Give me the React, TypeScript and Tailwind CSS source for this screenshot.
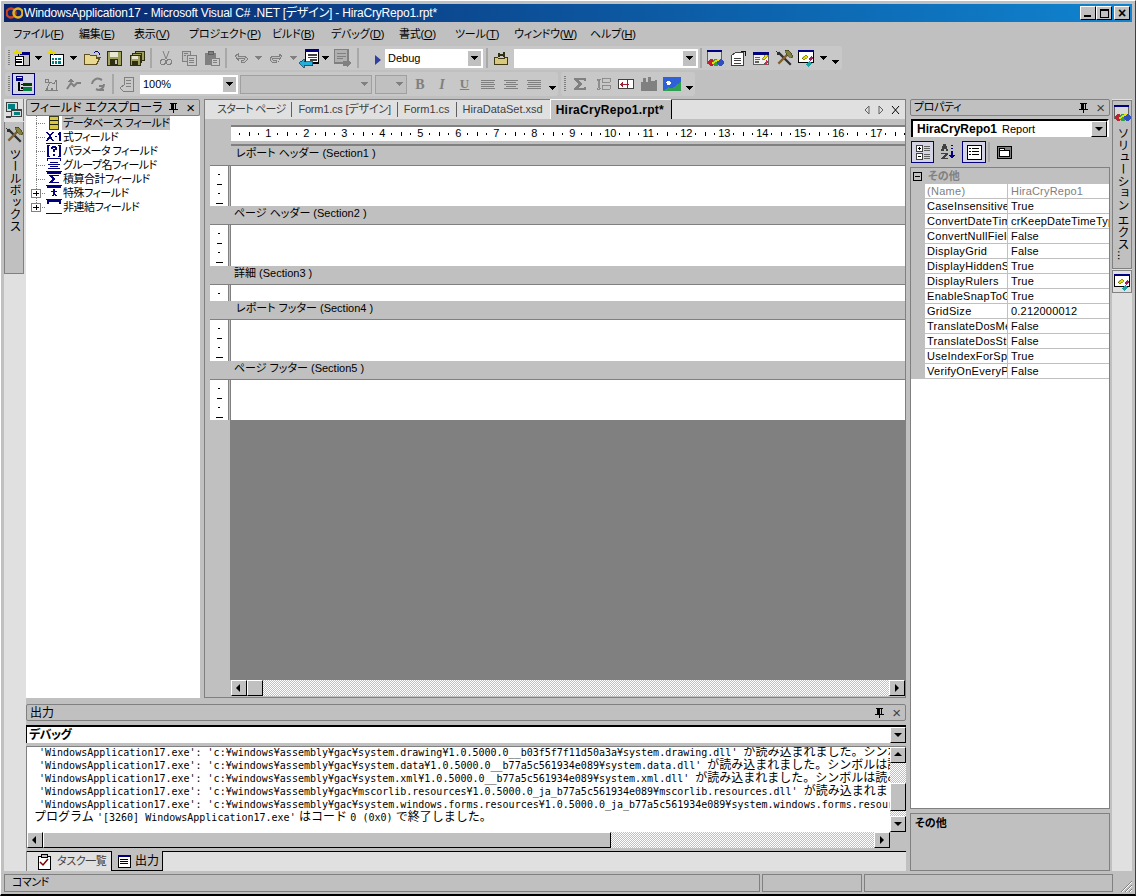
import React from 'react';

const bevel = 'border border-t-white border-l-white border-b-black border-r-black bg-[#c0c0c0]';
const dither = 'bg-[repeating-conic-gradient(#ffffff_0_25%,#c0c0c0_0_50%)] bg-[length:2px_2px]';

type IconProps = { children: React.ReactNode; size?: number };

const Ico = ({ children, size = 16 }: IconProps) => (
  <svg width={size} height={size} viewBox="0 0 16 16" shapeRendering="crispEdges" className="shrink-0">
    {children}
  </svg>
);

const DropArrow = ({ color = '#000' }: { color?: string }) => (
  <svg width="7" height="4" viewBox="0 0 7 4" shapeRendering="crispEdges">
    <path d="M0 0h7v1H6v1H5v1H4v1H3V3H2V2H1V1H0z" fill={color} />
  </svg>
);

const Chevron = () => (
  <div className="flex flex-col items-center mt-[14px]">
    <DropArrow />
  </div>
);

const Sparkle = () => (
  <path d="M3 0h1v2h1V0h1v3h2v1H6v2H5V4H3v2H2V4H0V3h2z" fill="#e8d800" />
);

const icons = {
  newProject: (
    <Ico size={18}>
      <rect x="5" y="3" width="10" height="12" fill="#c0c0c0" stroke="#000" />
      <rect x="5" y="3" width="10" height="2" fill="#000080" />
      <rect x="2" y="7" width="7" height="8" fill="#fff" stroke="#000" />
      <path d="M3 9h5v1H3zM3 11h5v1H3z" fill="#000" />
      <Sparkle />
    </Ico>
  ),
  addItem: (
    <Ico size={18}>
      <rect x="3" y="5" width="12" height="10" fill="#fff" stroke="#000" />
      <path d="M4 8h2v2H4zM7 8h2v2H7zM10 8h2v2h-2zM4 11h2v2H4zM7 11h2v2H7zM10 11h2v2h-2z" fill="#008080" />
      <Sparkle />
    </Ico>
  ),
  open: (
    <Ico size={18}>
      <path d="M1 5h5l1 1h5v2h3l-3 6H1z" fill="#e8d890" stroke="#605020" />
      <path d="M10 3l2-1 2 1 1 2" fill="none" stroke="#000080" />
    </Ico>
  ),
  save: (
    <Ico size={16}>
      <rect x="1" y="1" width="14" height="14" fill="#a0a060" stroke="#303010" />
      <rect x="4" y="2" width="8" height="5" fill="#e8e8d0" />
      <rect x="4" y="9" width="8" height="6" fill="#303010" />
      <rect x="9" y="10" width="2" height="4" fill="#c0c0c0" />
    </Ico>
  ),
  saveAll: (
    <Ico size={16}>
      <rect x="6" y="1" width="9" height="9" fill="#a0a060" stroke="#303010" />
      <rect x="3" y="3" width="9" height="9" fill="#a0a060" stroke="#303010" />
      <rect x="1" y="5" width="10" height="10" fill="#a0a060" stroke="#303010" />
      <rect x="3" y="6" width="6" height="3" fill="#e8e8d0" />
      <rect x="3" y="11" width="6" height="4" fill="#303010" />
    </Ico>
  ),
  cut: (
    <Ico>
      <path d="M5 1l3 8M11 1L8 9" stroke="#808080" fill="none" shapeRendering="auto" />
      <circle cx="5" cy="12" r="2.5" fill="none" stroke="#808080" />
      <circle cx="11" cy="12" r="2.5" fill="none" stroke="#808080" />
    </Ico>
  ),
  copy: (
    <Ico>
      <rect x="1" y="1" width="8" height="10" fill="#c0c0c0" stroke="#808080" />
      <rect x="6" y="5" width="9" height="10" fill="#c8c8c8" stroke="#808080" />
      <path d="M8 8h5v1H8zM8 10h5v1H8zM8 12h5v1H8zM3 3h4v1H3zM3 5h2v1H3z" fill="#808080" />
    </Ico>
  ),
  paste: (
    <Ico>
      <rect x="1" y="3" width="11" height="12" fill="#808080" />
      <rect x="4" y="1" width="5" height="3" fill="#808080" stroke="#606060" />
      <rect x="7" y="8" width="8" height="7" fill="#c8c8c8" stroke="#808080" />
      <path d="M9 10h4v1H9zM9 12h4v1H9z" fill="#808080" />
    </Ico>
  ),
  undo: (
    <Ico>
      <path d="M2 6l3-2v2h6l3 2v2l-2 2H8v-2h3l1-1-1-1H5v2z" fill="#c0c0c0" stroke="#808080" />
    </Ico>
  ),
  redo: (
    <Ico>
      <path d="M14 6l-3-2v2H5L2 8v2l2 2h4v-2H5L4 9l1-1h6v2z" fill="#c0c0c0" stroke="#808080" />
    </Ico>
  ),
  nav: (
    <Ico size={20}>
      <rect x="5" y="1" width="11" height="11" fill="#fff" stroke="#000" />
      <rect x="5" y="1" width="11" height="2" fill="#000080" />
      <path d="M7 5h7v1H7zM7 7h7v1H7zM9 9h5v1H9z" fill="#404040" />
      <path d="M0 12l4-3v2h7v3H4v2z" fill="#20b0d8" stroke="#004060" strokeWidth="0.6" />
    </Ico>
  ),
  find: (
    <Ico size={20}>
      <rect x="1" y="1" width="11" height="11" fill="#b0b0b0" stroke="#808080" />
      <path d="M3 4h7v1H3zM3 6h7v1H3zM3 8h5v1H3z" fill="#808080" />
      <path d="M8 10h3V8l4 4-4 4v-2H8z" fill="#808080" />
    </Ico>
  ),
  openFind: (
    <Ico size={17}>
      <path d="M1 7h3l1 1h6v-1h3v7H1z" fill="#d8c880" stroke="#403810" />
      <path d="M5 3h2v4H5zM9 2h2v5H9zM7 4h2v2H7z" fill="#303010" />
    </Ico>
  ),
  solution: (
    <Ico size={18}>
      <rect x="1" y="1" width="13" height="12" fill="#d8d8d8" stroke="#606060" />
      <rect x="1" y="1" width="13" height="2" fill="#000080" />
      <circle cx="5" cy="12" r="3" fill="#c02030" />
      <circle cx="9" cy="12" r="3" fill="#30a040" />
      <circle cx="13" cy="12" r="3" fill="#3050c0" />
      <path d="M5 13L12 9" stroke="#e8e000" strokeWidth="1.5" />
    </Ico>
  ),
  properties: (
    <Ico size={18}>
      <path d="M2 6l4-3h7v12H2z" fill="#fff" stroke="#404040" />
      <path d="M4 8h7v1H4zM4 10h7v1H4zM4 12h7v1H4z" fill="#404040" />
      <path d="M11 2h4v4h-1V3h-3z" fill="#000080" />
    </Ico>
  ),
  classView: (
    <Ico size={18}>
      <rect x="1" y="3" width="14" height="11" fill="#f0f0f0" stroke="#606060" />
      <rect x="1" y="3" width="14" height="2" fill="#000080" />
      <path d="M3 7h4v1H3zM3 9h4v1H3zM3 11h3v1H3z" fill="#606060" />
      <path d="M9 9l3-4 2 1-3 4z" fill="#e8e000" stroke="#505000" strokeWidth="0.5" />
      <path d="M11 13l2-3 2 1-2 3z" fill="#c03050" />
    </Ico>
  ),
  tools: (
    <Ico size={18}>
      <path d="M3 3l11 11" stroke="#303030" strokeWidth="2" shapeRendering="auto" />
      <path d="M13 3L3 13" stroke="#806030" strokeWidth="2" shapeRendering="auto" />
      <path d="M9 1h3l3 3 1 3-2 1-4-4z" fill="#808040" stroke="#303010" strokeWidth="0.5" />
      <path d="M1 2l3 1v2H2z" fill="#303030" />
    </Ico>
  ),
  toolbox: (
    <Ico size={18}>
      <rect x="1" y="1" width="14" height="11" fill="#fff" stroke="#000" />
      <rect x="1" y="1" width="14" height="2" fill="#000080" />
      <path d="M4 8l4-3 2 2-4 3z" fill="#e8e000" stroke="#505000" strokeWidth="0.5" />
      <path d="M10 9l3-3 2 2-3 3z" fill="#a02060" />
      <path d="M8 14l3-3 2 2-3 3z" fill="#20a0a0" />
    </Ico>
  ),
  fieldExplorer: (
    <Ico size={18}>
      <rect x="1" y="1" width="6" height="4" fill="#000080" />
      <rect x="2" y="2" width="4" height="1" fill="#e8e8e8" />
      <path d="M3 6h1v7h3v1H3zM5 8h2v1H5zM5 11h2v1H5z" fill="#000" />
      <rect x="7" y="7" width="8" height="3" fill="#004000" />
      <rect x="7" y="11" width="8" height="3" fill="#008040" />
    </Ico>
  ),
  gallery: (
    <Ico>
      <path d="M3 14l4-8 4 2 2-4 1 10z" fill="none" stroke="#808080" />
      <circle cx="4" cy="5" r="2" fill="none" stroke="#808080" />
      <circle cx="4" cy="13" r="1.5" fill="#808080" />
      <circle cx="9" cy="13" r="1.5" fill="#808080" />
    </Ico>
  ),
  trend: (
    <Ico>
      <path d="M1 13l4-6 3 3 3-3h4" fill="none" stroke="#808080" strokeWidth="2" shapeRendering="auto" />
      <path d="M5 2l3 4H2z" fill="#808080" />
    </Ico>
  ),
  refresh: (
    <Ico>
      <path d="M2 8a6 6 0 0 1 8-5l2 1M14 8a6 6 0 0 1-6 6l-2-1" fill="none" stroke="#808080" strokeWidth="2" shapeRendering="auto" />
      <path d="M9 9h5v1l-3 3h3v2H9v-1l3-3H9z" fill="#808080" />
    </Ico>
  ),
  browse: (
    <Ico>
      <path d="M5 1h9v14H4l-3-3 4-3z" fill="none" stroke="#808080" />
      <path d="M7 4h5v1H7zM7 7h5v1H7zM7 10h5v1H7z" fill="#808080" />
    </Ico>
  ),
  sum: (
    <Ico>
      <path d="M2 2h12v3h-2V4H6l4 4-4 4h6v-1h2v3H2v-2l4-4-4-4z" fill="#808080" />
    </Ico>
  ),
  tree: (
    <Ico>
      <path d="M2 3h3v1H4v8h1v1H2v-1h1V4H2zM7 2h8v4H7zM7 9h8v4H7z" fill="none" stroke="#808080" strokeWidth="0.8" />
    </Ico>
  ),
  link: (
    <Ico size={18}>
      <rect x="1" y="4" width="8" height="8" fill="#fff" stroke="#404040" />
      <rect x="9" y="4" width="6" height="8" fill="#fff" stroke="#404040" />
      <path d="M3 8h8v1H3zM3 8l2-2v5z" fill="#a02030" />
    </Ico>
  ),
  chart: (
    <Ico size={18}>
      <path d="M1 14V6h2V3h2v3h2V2h3v3h3V4h2v10z" fill="#808080" />
    </Ico>
  ),
  picture: (
    <Ico size={18}>
      <rect x="0" y="2" width="16" height="12" fill="#3060d8" />
      <path d="M0 14l5-3 3 1 8-6v8z" fill="#30a050" />
      <circle cx="5" cy="7" r="2" fill="#fff" />
    </Ico>
  ),
  computer: (
    <Ico size={18}>
      <rect x="1" y="1" width="10" height="8" fill="#d8d8d8" stroke="#404040" />
      <rect x="3" y="3" width="6" height="4" fill="#008080" />
      <rect x="6" y="8" width="9" height="6" fill="#d8d8d8" stroke="#404040" />
      <rect x="8" y="10" width="5" height="2" fill="#008080" />
      <path d="M1 13h4v2H1z" fill="#404040" />
    </Ico>
  ),
  database: (
    <Ico size={14}>
      <rect x="3" y="1" width="10" height="14" fill="#d8c840" stroke="#202000" />
      <path d="M3 5h10v1H3zM3 9h10v1H3z" fill="#202000" />
    </Ico>
  ),
  formula: (
    <svg width="16" height="13" viewBox="0 0 16 13" className="shrink-0" shapeRendering="crispEdges">
      <path d="M0 1h2l2 3 2-3h2L5 5l3 5H6L4 7l-2 3H0l3-5zM9 5h2v1H9zM13 1h2v9h-2V3l-1 1V2zM0 12h16v1H0z" fill="#000080" />
    </svg>
  ),
  param: (
    <svg width="16" height="14" viewBox="0 0 16 14" className="shrink-0" shapeRendering="crispEdges">
      <path d="M1 1h3v1H3v10h1v1H1zM12 1h3v12h-3v-1h1V2h-1zM6 2h4v1h1v3H9v2H7V5h2V4H7v1H5V3h1zM7 10h2v2H7z" fill="#000080" />
    </svg>
  ),
  group: (
    <svg width="16" height="14" viewBox="0 0 16 14" className="shrink-0" shapeRendering="crispEdges">
      <path d="M1 0h14v3h-1V1H2v2H1zM4 4h8v1H4zM2 6h12v1H2zM4 8h8v1H4zM2 10h12v1H2zM0 13h16v1H0z" fill="#000080" />
    </svg>
  ),
  sigma: (
    <svg width="16" height="14" viewBox="0 0 16 14" className="shrink-0" shapeRendering="crispEdges">
      <path d="M1 0h14v2H1zM3 3h10v1h-7l3 3-3 3h7v1H3v-1l3-3-3-3zM0 13h16v1H0z" fill="#000080" />
    </svg>
  ),
  special: (
    <svg width="16" height="14" viewBox="0 0 16 14" className="shrink-0" shapeRendering="crispEdges">
      <path d="M1 0h14v2H1zM7 3h2v2h2v1H9v2l2 2H9l-1-1-1 1H5l2-2V6H5V5h2zM0 13h16v1H0z" fill="#000080" />
    </svg>
  ),
  unbound: (
    <svg width="16" height="14" viewBox="0 0 16 14" className="shrink-0" shapeRendering="crispEdges">
      <path d="M1 0h14v2H1zM1 2h2v2H1zM13 2h2v2h-2zM0 13h16v1H0z" fill="#000080" />
    </svg>
  ),
  categorized: (
    <Ico>
      <rect x="1" y="1" width="6" height="6" fill="#fff" stroke="#404040" />
      <rect x="1" y="9" width="6" height="6" fill="#fff" stroke="#404040" />
      <path d="M3 4h3v1H3zM4 3h1v3H4zM3 12h3v1H3z" fill="#000" />
      <path d="M9 2h6v1H9zM9 4h6v1H9zM9 6h6v1H9zM9 10h6v1H9zM9 12h6v1H9zM9 14h6v1H9z" fill="#606060" />
    </Ico>
  ),
  az: (
    <Ico>
      <path d="M3 0h3l2 7H6L5.500 5h-1L4 7H1zM1 9h7v1L4 14h4v1H1v-1l4-4H1z" fill="#404040" />
      <path d="M11 1h2v1h-2zM11 4h2v1h-2zM11 7h2v4h2l-3 4-3-4h2z" fill="#000080" />
    </Ico>
  ),
  list: (
    <Ico>
      <rect x="1" y="1" width="14" height="14" fill="#fff" stroke="#000" />
      <path d="M3 4h2v1H3zM6 4h7v1H6zM3 7h2v1H3zM6 7h7v1H6zM3 10h2v1H3zM6 10h7v1H6z" fill="#000" />
    </Ico>
  ),
  pages: (
    <Ico>
      <rect x="1" y="2" width="14" height="12" fill="#808080" stroke="#000" />
      <rect x="3" y="6" width="10" height="6" fill="#fff" stroke="#000" />
      <rect x="3" y="4" width="5" height="2" fill="#fff" stroke="#000" />
    </Ico>
  ),
  check: (
    <Ico>
      <rect x="2" y="2" width="12" height="13" fill="#fff" stroke="#000" />
      <rect x="5" y="0" width="6" height="3" fill="#c0c0c0" stroke="#000" />
      <path d="M4 8l3 3 5-6" fill="none" stroke="#800000" strokeWidth="1.5" shapeRendering="auto" />
    </Ico>
  ),
  outputDoc: (
    <Ico>
      <rect x="2" y="2" width="12" height="12" fill="#fff" stroke="#000" />
      <path d="M2 2h12v2H2z" fill="#000080" />
      <path d="M4 6h8v1H4zM4 8h8v1H4zM4 10h8v1H4z" fill="#000" />
    </Ico>
  ),
};

const Cell = ({ className, children }: { className: string; children?: React.ReactNode }) => (
  <div className={`flex items-center justify-center shrink-0 h-full ${className}`}>{children}</div>
);

const Sep = ({ className = 'w-[6px]' }: { className?: string }) => (
  <div className={`flex justify-center items-center h-full shrink-0 ${className}`}>
    <div className="w-[2px] h-[20px] bg-[#a8a8a8]" />
  </div>
);

const Grip = () => (
  <Cell className="w-[7px]">
    <div className="w-[2px] h-[16px] bg-[repeating-linear-gradient(to_bottom,#808080_0_1px,transparent_1px_2px)]" />
  </Cell>
);

const Combo = ({ className, text, disabled }: { className: string; text?: string; disabled?: boolean }) => (
  <div
    className={`flex h-[19px] items-stretch shrink-0 ${className} ${
      disabled ? 'border border-[#a0a0a0] bg-[#c0c0c0]' : 'bg-white border-2 border-white'
    }`}
  >
    <div className="flex-1 pl-[1px] leading-[14px] overflow-hidden whitespace-nowrap">{text}</div>
    <div className={`w-[13px] flex items-center justify-center ${disabled ? '' : 'bg-[#c0c0c0]'}`}>
      <DropArrow color={disabled ? '#808080' : '#000'} />
    </div>
  </div>
);

const PanelHeader = ({ title, titleClass = '', light }: { title: string; titleClass?: string; light?: boolean }) => (
  <div className="h-[17px] shrink-0 rounded-[2px] border border-[#808080] flex items-center pl-[3px] pr-[4px] leading-none">
    <span className={`flex-1 whitespace-nowrap ${titleClass}`}>{title}</span>
    <svg width="9" height="10" viewBox="0 0 9 10" shapeRendering="crispEdges" className="mr-[8px]">
      <path d="M2 0h6v1H7v5h2v1H5v3H4V7H0V6h2V1H1V0h1zm3 1v5h1V1z" fill="#000" />
    </svg>
    <span className={`text-[15px] leading-none font-light ${light ? 'text-[#404040]' : ''}`}>×</span>
  </div>
);

const Hot = ({ label, hot, className }: { label: string; hot: string; className: string }) => (
  <span className={`whitespace-nowrap shrink-0 tracking-[-0.2px] ${className}`}>
    {label}(<span className="underline">{hot}</span>)
  </span>
);

const Arrow = ({ dir }: { dir: 'l' | 'r' | 'u' | 'd' }) => {
  const p = {
    l: 'M5 0v8L1 4z',
    r: 'M2 0v8l4-4z',
    u: 'M4 1l4 4H0z',
    d: 'M0 2h8L4 6z',
  }[dir];
  return (
    <svg width="8" height="8" viewBox="0 0 8 8">
      <path d={p} fill="#000" />
    </svg>
  );
};

const ArrowBtn = ({ dir }: { dir: 'l' | 'r' | 'u' | 'd' }) => (
  <div className={`${bevel} w-[16px] h-[16px] shrink-0 flex items-center justify-center`}>
    <Arrow dir={dir} />
  </div>
);

const LeftRuler = ({ h }: { h: number }) => {
  const marks = h > 30;
  return (
    <div className="w-[18px] bg-white overflow-hidden relative flex flex-col items-center shrink-0 pt-[8px] gap-[8.5px]">
      <div className="w-[2px] h-[1px] bg-black shrink-0" />
      {marks && <div className="w-[5px] h-[1px] bg-black shrink-0" />}
      {marks && <div className="w-[2px] h-[1px] bg-black shrink-0" />}
      {marks && <div className="w-[7px] h-[1px] bg-black shrink-0" />}
    </div>
  );
};

const Section = ({ title, pl, barH, h }: { title: string; pl: string; barH: string; h: number }) => (
  <>
    <div className={`${barH} shrink-0 flex items-center leading-none whitespace-nowrap pb-[4px] ${pl}`}>{title}</div>
    <div className="flex shrink-0 border-t border-[#808080] bg-white" style={{ height: h }}>
      <LeftRuler h={h} />
      <div className="w-[3px] bg-[#c0c0c0] border-x border-[#808080] shrink-0" />
      <div className="flex-1 bg-white" />
    </div>
  </>
);

const Ruler = () => (
  <div className="ml-[26px] h-[15px] bg-white border-t-2 border-[#808080] flex pl-[4px] overflow-hidden shrink-0 leading-[13px]">
    {Array.from({ length: 18 }, (_, i) => i + 1).map((n) => (
      <div key={n} className="flex w-[38px] shrink-0 items-center text-center">
        <span className="w-[9.5px] flex justify-center"><i className="block w-[1px] h-[2px] bg-black" /></span>
        <span className="w-[9.5px] flex justify-center"><i className="block w-[1px] h-[4px] bg-black" /></span>
        <span className="w-[9.5px] flex justify-center"><i className="block w-[1px] h-[2px] bg-black" /></span>
        <span className="w-[9.5px] flex justify-center">{n}</span>
      </div>
    ))}
  </div>
);

const treeRows = [
  { icon: icons.database, label: 'データベース フィールド', selected: true },
  { icon: icons.formula, label: '式フィールド' },
  { icon: icons.param, label: 'パラメータ フィールド' },
  { icon: icons.group, label: 'グループ名フィールド' },
  { icon: icons.sigma, label: '積算合計フィールド' },
  { icon: icons.special, label: '特殊フィールド', expand: true },
  { icon: icons.unbound, label: '非連結フィールド', expand: true, last: true },
];

const props = [
  ['(Name)', 'HiraCryRepo1'],
  ['CaseInsensitiveSQLData', 'True'],
  ['ConvertDateTimeType', 'crKeepDateTimeType'],
  ['ConvertNullFieldToDefault', 'False'],
  ['DisplayGrid', 'False'],
  ['DisplayHiddenSections', 'True'],
  ['DisplayRulers', 'True'],
  ['EnableSnapToGrid', 'True'],
  ['GridSize', '0.212000012'],
  ['TranslateDosMemos', 'False'],
  ['TranslateDosStrings', 'False'],
  ['UseIndexForSpeed', 'True'],
  ['VerifyOnEveryPrint', 'False'],
];

const Mono = ({ children }: { children: string }) => (
  <span className="text-[10px] font-['DejaVu_Sans_Mono']">{children}</span>
);

const outputLines: [string, string][] = [
  [" 'WindowsApplication17.exe': 'c:¥windows¥assembly¥gac¥system.drawing¥1.0.5000.0__b03f5f7f11d50a3a¥system.drawing.dll' ", 'が読み込まれました。シンボルは読み込まれませんでした。'],
  [" 'WindowsApplication17.exe': 'c:¥windows¥assembly¥gac¥system.data¥1.0.5000.0__b77a5c561934e089¥system.data.dll' ", 'が読み込まれました。シンボルは読み込まれませんでした。'],
  [" 'WindowsApplication17.exe': 'c:¥windows¥assembly¥gac¥system.xml¥1.0.5000.0__b77a5c561934e089¥system.xml.dll' ", 'が読み込まれました。シンボルは読み込まれませんでした。'],
  [" 'WindowsApplication17.exe': 'c:¥windows¥assembly¥gac¥mscorlib.resources¥1.0.5000.0_ja_b77a5c561934e089¥mscorlib.resources.dll' ", 'が読み込まれました。シンボルは読み込まれませんでした。'],
  [" 'WindowsApplication17.exe': 'c:¥windows¥assembly¥gac¥system.windows.forms.resources¥1.0.5000.0_ja_b77a5c561934e089¥system.windows.forms.resources.dll' ", 'が読み込まれました。'],
];

export default function App() {
  return (
    <div className="w-[1136px] h-[896px] overflow-hidden bg-[#c0c0c0] text-black p-[3px] pb-[2px] flex flex-col text-[11px] font-['Liberation_Sans','Noto_Sans_CJK_JP',sans-serif] [font-feature-settings:'palt'] border-b-2 border-r border-b-black border-r-[#404040] border-t border-l border-t-white border-l-white">
      {/* title bar */}
      <div className="h-[18px] shrink-0 flex items-center bg-linear-to-r from-[#0a246a] to-[#1084d0] text-white pl-[2px] pr-[2px]">
        <svg width="17" height="14" viewBox="0 0 17 14" className="shrink-0">
          <circle cx="5" cy="7" r="4.500" fill="none" stroke="#d04020" strokeWidth="2.500" />
          <circle cx="12" cy="7" r="4.500" fill="none" stroke="#e8b020" strokeWidth="2.500" />
        </svg>
        <span className="flex-1 pl-[1px] text-[12px] leading-none whitespace-nowrap tracking-[-0.2px]">
          WindowsApplication17 - Microsoft Visual C# .NET [デザイン] - HiraCryRepo1.rpt*
        </span>
        <div className="flex">
          <div className={`${bevel} w-[16px] h-[14px] flex items-end pl-[3px] pb-[2px]`}><i className="block w-[7px] h-[2px] bg-black" /></div>
          <div className={`${bevel} w-[16px] h-[14px] flex items-center justify-center`}><i className="block w-[9px] h-[9px] border border-t-2 border-black" /></div>
          <div className={`${bevel} ml-[2px] w-[16px] h-[14px] flex items-center justify-center text-black text-[14px] font-bold leading-none`}>×</div>
        </div>
      </div>

      {/* menu */}
      <div className="h-[24px] shrink-0 flex items-center pl-[9px]">
        <Hot className="w-[66px]" label="ファイル" hot="F" />
        <Hot className="w-[55px]" label="編集" hot="E" />
        <Hot className="w-[55px]" label="表示" hot="V" />
        <Hot className="w-[83px]" label="プロジェクト" hot="P" />
        <Hot className="w-[59px]" label="ビルド" hot="B" />
        <Hot className="w-[68px]" label="デバッグ" hot="D" />
        <Hot className="w-[56px]" label="書式" hot="O" />
        <Hot className="w-[59px]" label="ツール" hot="T" />
        <Hot className="w-[76px]" label="ウィンドウ" hot="W" />
        <Hot className="w-[60px]" label="ヘルプ" hot="H" />
      </div>

      {/* toolbar 1 */}
      <div className="h-[24px] shrink-0 flex">
        <div className="ml-[1px] w-[837px] h-full flex items-center bg-[#c8c8c8] rounded-[3px]">
          <Grip />
          <Cell className="w-[19px]">{icons.newProject}</Cell>
          <Cell className="w-[15px]"><DropArrow /></Cell>
          <Cell className="w-[20px]">{icons.addItem}</Cell>
          <Cell className="w-[15px]"><DropArrow /></Cell>
          <Cell className="w-[21px]">{icons.open}</Cell>
          <Cell className="w-[23px]">{icons.save}</Cell>
          <Cell className="w-[23px]">{icons.saveAll}</Cell>
          <Sep />
          <Cell className="w-[23px]">{icons.cut}</Cell>
          <Cell className="w-[23px]">{icons.copy}</Cell>
          <Cell className="w-[23px]">{icons.paste}</Cell>
          <Sep />
          <Cell className="w-[23px]">{icons.undo}</Cell>
          <Cell className="w-[12px]"><DropArrow color="#808080" /></Cell>
          <Cell className="w-[23px]">{icons.redo}</Cell>
          <Cell className="w-[12px]"><DropArrow color="#808080" /></Cell>
          <Cell className="w-[20px]">{icons.nav}</Cell>
          <Cell className="w-[12px]"><DropArrow /></Cell>
          <Cell className="w-[24px]">{icons.find}</Cell>
          <Sep />
          <Cell className="w-[24px] pt-[4px] pr-[4px] justify-end">
            <svg width="6" height="10" viewBox="0 0 6 10"><path d="M0 0l6 5-6 5z" fill="#3040a0" /></svg>
          </Cell>
          <Combo className="w-[98px]" text="Debug" />
          <Sep className="w-[8px]" />
          <Cell className="w-[21px]">{icons.openFind}</Cell>
          <Combo className="w-[184px] ml-[2px]" />
          <Sep className="w-[6px]" />
          <Cell className="w-[22px]">{icons.solution}</Cell>
          <Cell className="w-[23px]">{icons.properties}</Cell>
          <Cell className="w-[23px]">{icons.classView}</Cell>
          <Cell className="w-[23px]">{icons.tools}</Cell>
          <Cell className="w-[22px]">{icons.toolbox}</Cell>
          <Cell className="w-[12px]"><DropArrow /></Cell>
          <Cell className="w-[12px] items-start"><Chevron /></Cell>
        </div>
      </div>

      {/* toolbar 2 */}
      <div className="h-[24px] mt-[2px] shrink-0 flex gap-[3px]">
        <div className="ml-[1px] w-[553px] h-full flex items-center bg-[#c8c8c8] rounded-[3px]">
          <Grip />
          <Cell className="w-[23px]">
            <div className="w-[23px] h-[22px] border border-[#000080] bg-[#d4d4e4] flex items-center justify-center">{icons.fieldExplorer}</div>
          </Cell>
          <Cell className="w-[4px]" />
          <Cell className="w-[23px]">{icons.gallery}</Cell>
          <Cell className="w-[23px]">{icons.trend}</Cell>
          <Cell className="w-[25px]">{icons.refresh}</Cell>
          <Sep className="w-[5px]" />
          <Cell className="w-[24px]">{icons.browse}</Cell>
          <Combo className="w-[98px] ml-[1px]" text="100%" />
          <Combo disabled className="w-[132px] ml-[2px]" />
          <Combo disabled className="w-[32px] ml-[3px]" />
          <Cell className="w-[2px]" />
          <Cell className="w-[22px] font-['Liberation_Serif'] font-bold text-[#808080] text-[14px]">B</Cell>
          <Cell className="w-[22px] font-['Liberation_Serif'] font-bold italic text-[#808080] text-[14px]">I</Cell>
          <Cell className="w-[23px] font-['Liberation_Serif'] font-bold underline text-[#808080] text-[13px]">U</Cell>
          {['w-[13px]', 'w-[10px] mx-auto', 'w-[13px] ml-auto'].map((a, i) => (
            <Cell key={i} className="w-[23px]">
              <div className="w-[14px] flex flex-col gap-[1px]">
                <i className="block h-[1px] w-[14px] bg-[#808080]" />
                <i className={`block h-[1px] bg-[#808080] ${a}`} />
                <i className="block h-[1px] w-[14px] bg-[#808080]" />
                <i className={`block h-[1px] bg-[#808080] ${a}`} />
                <i className="block h-[1px] w-[14px] bg-[#808080]" />
              </div>
            </Cell>
          ))}
          <Cell className="w-[14px] items-start"><Chevron /></Cell>
        </div>
        <div className="w-[134px] h-full flex items-center bg-[#c8c8c8] rounded-[3px]">
          <Grip />
          <Cell className="w-[23px]">{icons.sum}</Cell>
          <Cell className="w-[23px]">{icons.tree}</Cell>
          <Cell className="w-[23px]">{icons.link}</Cell>
          <Cell className="w-[23px]">{icons.chart}</Cell>
          <Cell className="w-[23px]">{icons.picture}</Cell>
          <Cell className="w-[12px] items-start"><Chevron /></Cell>
        </div>
      </div>

      {/* main */}
      <div className="h-[772px] mt-[3px] shrink-0 flex">
        {/* left dock strip */}
        <div className="w-[22px] shrink-0 bg-[#e0e0e0] pr-[2px] flex flex-col">
          <div className="h-[22px] bg-[#e0e0e0] flex items-center justify-center border-r border-[#808080]">{icons.computer}</div>
          <div className="h-[152px] mt-[1px] bg-[#c0c0c0] border-x border-b border-[#808080] flex flex-col items-center pt-[4px]">
            {icons.tools}
            <span className="mt-[4px] text-[12px] [writing-mode:vertical-rl] [font-feature-settings:normal] leading-none">ツールボックス</span>
          </div>
        </div>

        {/* center */}
        <div className="w-[880px] shrink-0 flex flex-col">
          <div className="h-[599px] shrink-0 flex">
            {/* field explorer */}
            <div className="w-[174px] shrink-0 flex flex-col">
              <PanelHeader title="フィールド エクスプローラ" titleClass="text-[12px]" />
              <div className="flex-1 bg-white flex flex-col">
                {treeRows.map((r) => (
                  <div key={r.label} className="h-[14px] flex items-center shrink-0">
                    <svg width="20" height="14" viewBox="0 0 20 14" shapeRendering="crispEdges" className="shrink-0">
                      <path d={r.last ? 'M10 0v7' : 'M10 0v14'} stroke="#808080" strokeDasharray="1 1" />
                      <path d="M10 7.500h10" stroke="#808080" strokeDasharray="1 1" />
                      {r.expand && (
                        <>
                          <rect x="5.500" y="3.500" width="9" height="8" fill="#fff" stroke="#808080" />
                          <path d="M7 7h6v1H7zM9.500 5h1v5h-1z" fill="#000" />
                        </>
                      )}
                    </svg>
                    <div className="w-[16px] flex justify-center shrink-0">{r.icon}</div>
                    <span className={`whitespace-nowrap leading-[14px] pl-[1px] tracking-[-0.5px] ${r.selected ? 'bg-[#c0c0c0] w-[108px]' : ''}`}>
                      {r.label}
                    </span>
                  </div>
                ))}
              </div>
            </div>

            {/* report editor */}
            <div className="ml-[4px] w-[702px] shrink-0 flex flex-col border border-t-0 border-[#808080]">
              <div className="h-[20px] shrink-0 bg-[#e0e0e0] border-t border-[#808080] flex items-center pl-[12px] text-[#404040] whitespace-nowrap">
                <span className="tracking-[-0.75px]">スタート ページ</span>
                <i className="block w-[1px] h-[15px] bg-[#606060] mx-[6px]" />
                <span className="tracking-[-0.2px]">Form1.cs [デザイン]</span>
                <i className="block w-[1px] h-[15px] bg-[#606060] mx-[6px]" />
                <span>Form1.cs</span>
                <i className="block w-[1px] h-[15px] bg-[#606060] mx-[6px]" />
                <span>HiraDataSet.xsd</span>
                <div className="ml-[7px] h-[20px] self-end w-[122px] bg-[#c0c0c0] border-t border-l border-t-white border-l-white border-r border-r-black pl-[5px] flex items-center font-bold text-black text-[12px] tracking-[0.25px]">
                  HiraCryRepo1.rpt*
                </div>
                <div className="flex-1" />
                <svg width="36" height="10" viewBox="0 0 36 10" className="mr-[5px]">
                  <path d="M5 1v8L1 5z M15 1v8l4-4z" fill="none" stroke="#606060" />
                  <path d="M28 1l7 8M35 1l-7 8" stroke="#000" />
                </svg>
              </div>
              <div className="flex-1 flex flex-col pt-[6px] overflow-hidden">
                <Ruler />
                <div className="h-[6px] shrink-0 ml-[26px] border-b-2 border-[#808080] border-t border-t-white" />
                <div className="pl-[5px] flex flex-col shrink-0 pr-0">
                  <Section title="レポート ヘッダー  (Section1 )" pl="pl-[26px]" barH="h-[19px]" h={41} />
                  <Section title="ページ ヘッダー  (Section2 )" pl="pl-[24px]" barH="h-[18px]" h={42} />
                  <Section title="詳細  (Section3 )" pl="pl-[24px]" barH="h-[18px]" h={17} />
                  <Section title="レポート フッター  (Section4 )" pl="pl-[26px]" barH="h-[18px]" h={42} />
                  <Section title="ページ フッター  (Section5 )" pl="pl-[24px]" barH="h-[18px]" h={41} />
                </div>
                <div className="ml-[25px] h-[260px] shrink-0 bg-[#808080]" />
                <div className="ml-[26px] h-[16px] shrink-0 flex">
                  <ArrowBtn dir="l" />
                  <div className={`${bevel} w-[16px] h-[16px]`} />
                  <div className={`flex-1 ${dither}`} />
                  <ArrowBtn dir="r" />
                </div>
              </div>
            </div>
          </div>

          {/* output */}
          <div className="mt-[6px] h-[167px] shrink-0 flex flex-col">
            <PanelHeader title="出力" titleClass="text-[12px]" light />
            <div className="mt-[4px] h-[18px] shrink-0 bg-white border-t-2 border-l border-t-black border-l-black flex pl-[2px] font-bold text-[12px] leading-[16px]">
              <span className="flex-1 tracking-[-0.6px]">デバッグ</span>
              <ArrowBtn dir="d" />
            </div>
            <div className="mt-[3px] h-[102px] shrink-0 flex flex-col border-t border-l border-[#808080]">
              <div className="h-[85px] flex shrink-0">
                <div className="flex-1 bg-white overflow-hidden pl-[6px] whitespace-pre text-[12px] [font-feature-settings:normal]">
                  {outputLines.map(([latin, jp]) => (
                    <div key={latin} className="h-[13px] leading-[11px]">
                      <Mono>{latin}</Mono>
                      <span>{jp}</span>
                    </div>
                  ))}
                  <div className="h-[13px] leading-[11px] pl-[1px]">
                    プログラム <Mono>'[3260] WindowsApplication17.exe'</Mono> はコード <Mono>0 (0x0)</Mono> で終了しました。
                  </div>
                </div>
                <div className={`w-[16px] flex flex-col shrink-0 ${dither}`}>
                  <ArrowBtn dir="u" />
                  <div className="h-[20px] shrink-0" />
                  <div className={`${bevel} h-[28px] shrink-0`} />
                  <div className="flex-1" />
                  <ArrowBtn dir="d" />
                </div>
              </div>
              <div className="flex-1 flex">
                <ArrowBtn dir="l" />
                <div className={`${bevel} w-[568px] h-[16px] shrink-0`} />
                <div className={`flex-1 ${dither}`} />
                <ArrowBtn dir="r" />
                <div className="w-[16px] shrink-0" />
              </div>
            </div>
            <div className="mt-[3px] flex-1 flex bg-[#e0e0e0] border-l border-[#808080] whitespace-nowrap">
              <div className="w-[84px] border-t border-black flex items-center pl-[9px] gap-[5px] text-[#404040] tracking-[-0.4px]">
                {icons.check}
                <span>タスク一覧</span>
              </div>
              <div className="w-[52px] bg-[#c0c0c0] border-r border-b border-l border-black flex items-center pl-[4px] gap-[3px] text-[12px]">
                {icons.outputDoc}
                <span>出力</span>
              </div>
              <div className="flex-1 border-t border-black" />
            </div>
          </div>
        </div>

        {/* properties */}
        <div className="ml-[4px] w-[200px] shrink-0 flex flex-col">
          <PanelHeader title="プロパティ" titleClass="tracking-[-0.4px]" light />
          <div className="mt-[3px] mx-[1px] h-[18px] bg-white border-t-2 border-l-2 border-t-black border-l-black flex items-center shrink-0 pl-[4px] border-r-2 border-r-white">
            <span className="font-bold text-[12px] whitespace-nowrap">HiraCryRepo1</span>
            <span className="ml-[5px] flex-1">Report</span>
            <ArrowBtn dir="d" />
          </div>
          <div className="mt-[3px] h-[23px] shrink-0 flex items-center pl-[1px]">
            <div className="w-[23px] h-[22px] border border-[#000080] bg-[#d4d4e4] flex items-center justify-center">{icons.categorized}</div>
            <Cell className="w-[28px]">{icons.az}</Cell>
            <div className="w-[24px] h-[22px] border border-[#000080] bg-[#d4d4e4] flex items-center justify-center">{icons.list}</div>
            <Sep className="w-[6px]" />
            <Cell className="w-[24px]">{icons.pages}</Cell>
          </div>
          <div className="mt-[4px] h-[642px] shrink-0 bg-white border border-[#808080] flex flex-col">
            <div className="h-[16px] bg-[#c0c0c0] flex items-center shrink-0">
              <div className="ml-[2px] w-[9px] h-[9px] border border-black flex items-center justify-center">
                <i className="block w-[5px] h-[1px] bg-black" />
              </div>
              <span className="ml-[6px] font-bold text-[#808080]">その他</span>
            </div>
            {props.map(([name, value], i) => (
              <div key={name} className="h-[15px] flex shrink-0">
                <div className="w-[14px] bg-[#c0c0c0] shrink-0" />
                <div className={`w-[83px] shrink-0 pl-[2px] overflow-hidden whitespace-nowrap leading-[14px] tracking-[0.3px] border-b border-r border-[#c0c0c0] ${i === 0 ? 'text-[#808080]' : ''}`}>{name}</div>
                <div className={`flex-1 pl-[3px] overflow-hidden whitespace-nowrap leading-[14px] tracking-[0.2px] border-b border-[#c0c0c0] ${i === 0 ? 'text-[#808080]' : ''}`}>{value}</div>
              </div>
            ))}
          </div>
          <div className="mt-[4px] flex-1 border border-[#808080] pl-[4px] pt-[2px] font-bold leading-[14px]">その他</div>
        </div>

        {/* right dock strip */}
        <div className="ml-[2px] w-[20px] shrink-0 bg-[#e0e0e0] flex flex-col">
          <div className="h-[169px] mt-[1px] bg-[#c0c0c0] border border-[#808080] flex flex-col items-center pt-[3px]">
            {icons.solution}
            <span className="mt-[5px] text-[12px] [writing-mode:vertical-rl] [font-feature-settings:normal] leading-none whitespace-nowrap">ソリューション エクス...</span>
          </div>
          <div className="h-[23px] mt-[1px] bg-[#e0e0e0] border border-[#808080] flex items-center justify-center">{icons.toolbox}</div>
        </div>
      </div>

      {/* status bar */}
      <div className="h-[18px] mt-[3px] shrink-0 flex items-stretch">
        <div className="w-[756px] border border-[#808080] pl-[7px] leading-[15px] shrink-0 tracking-[-0.5px]">コマンド</div>
        <div className="ml-[2px] w-[100px] border border-[#808080] shrink-0" />
        <div className="ml-[2px] w-[249px] border border-[#808080] shrink-0" />
        <div className="flex-1 flex items-end justify-end">
          <svg width="12" height="12" viewBox="0 0 12 12">
            <path d="M12 1L1 12M12 5l-7 7M12 9l-3 3" stroke="#808080" />
            <path d="M12 2L2 12M12 6l-6 6M12 10l-2 2" stroke="#fff" />
          </svg>
        </div>
      </div>
    </div>
  );
}
